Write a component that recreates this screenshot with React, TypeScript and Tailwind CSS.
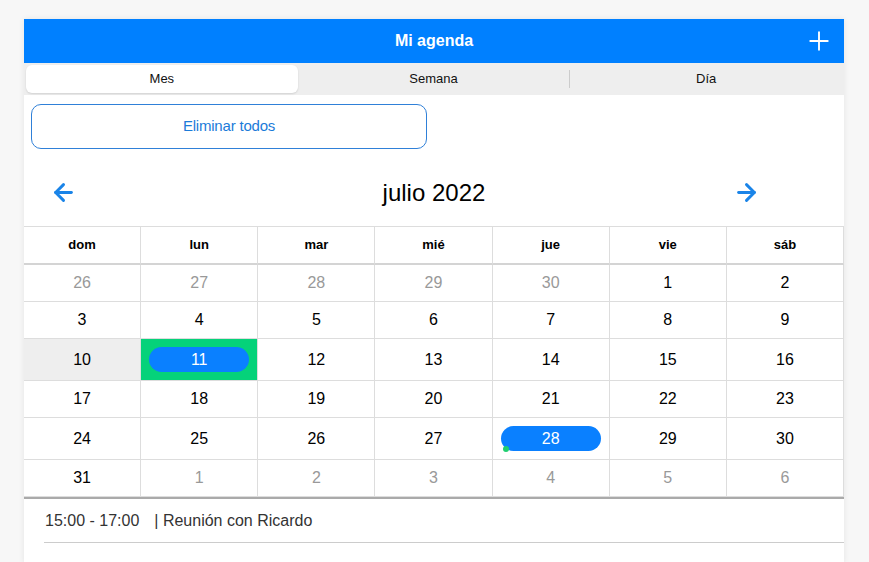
import React from 'react';
import { ArrowLeft, ArrowRight, Plus } from 'lucide-react';

type Day = { n: number; muted?: boolean; today?: boolean; selected?: boolean; event?: boolean };

const weekDays = ['dom', 'lun', 'mar', 'mié', 'jue', 'vie', 'sáb'];

const weeks: { tall?: boolean; days: Day[] }[] = [
  { days: [{ n: 26, muted: true }, { n: 27, muted: true }, { n: 28, muted: true }, { n: 29, muted: true }, { n: 30, muted: true }, { n: 1 }, { n: 2 }] },
  { days: [{ n: 3 }, { n: 4 }, { n: 5 }, { n: 6 }, { n: 7 }, { n: 8 }, { n: 9 }] },
  { tall: true, days: [{ n: 10, today: true }, { n: 11, selected: true }, { n: 12 }, { n: 13 }, { n: 14 }, { n: 15 }, { n: 16 }] },
  { days: [{ n: 17 }, { n: 18 }, { n: 19 }, { n: 20 }, { n: 21 }, { n: 22 }, { n: 23 }] },
  { tall: true, days: [{ n: 24 }, { n: 25 }, { n: 26 }, { n: 27 }, { n: 28, event: true }, { n: 29 }, { n: 30 }] },
  { days: [{ n: 31 }, { n: 1, muted: true }, { n: 2, muted: true }, { n: 3, muted: true }, { n: 4, muted: true }, { n: 5, muted: true }, { n: 6, muted: true }] },
];

const DayCell: React.FC<{ day: Day; tall?: boolean }> = ({ day, tall }) => {
  const base = `flex items-center justify-center border-r border-b border-[#dddddd] text-[16px] ${
    tall ? 'h-[42px]' : 'h-[37px]'
  }`;

  if (day.selected) {
    return (
      <div className={`${base} bg-[#05d27a] px-[8px]`}>
        <div className="w-full h-[25px] rounded-full bg-[#0a80ff] text-white flex items-center justify-center">
          {day.n}
        </div>
      </div>
    );
  }

  if (day.event) {
    return (
      <div className={`${base} px-[8px]`}>
        <div className="relative w-full h-[25px] rounded-full bg-[#0a80ff] text-white flex items-center justify-center">
          {day.n}
          <span className="absolute left-[2px] bottom-[-1px] w-[6px] h-[6px] rounded-full bg-[#1fcf6f]" />
        </div>
      </div>
    );
  }

  return (
    <div className={`${base} ${day.today ? 'bg-[#eeeeee]' : ''} ${day.muted ? 'text-[#999999]' : 'text-black'}`}>
      {day.n}
    </div>
  );
};

export default function App() {
  return (
    <div
      className="min-h-screen bg-[#f7f7f7] pt-[19px] pl-[24px]"
      style={{ fontFamily: '"Liberation Sans", Arial, sans-serif' }}
    >
      <div className="w-[820px] bg-white shadow-[0_0_6px_rgba(0,0,0,0.08)]">
        {/* Header */}
        <header className="h-[44px] bg-[#0080ff] grid grid-cols-[1fr_auto_1fr] items-center">
          <div />
          <h1 className="text-white text-[16px] font-bold">Mi agenda</h1>
          <div className="flex justify-end pr-[10px]">
            <Plus size={30} strokeWidth={1.5} className="text-white" />
          </div>
        </header>

        {/* Tabs */}
        <div className="h-[32px] bg-[#eeeeee] p-[2px] flex text-[13px] text-[#111]">
          <div className="flex-1 bg-white rounded-[6px] shadow-[0_1px_2px_rgba(0,0,0,0.12)] flex items-center justify-center">
            Mes
          </div>
          <div className="flex-1 flex items-center justify-center">Semana</div>
          <div className="w-px h-[18px] self-center bg-[#cccccc]" />
          <div className="flex-1 flex items-center justify-center">Día</div>
        </div>

        {/* Actions */}
        <div className="pt-[9px] px-[7px]">
          <button className="w-[396px] h-[45px] rounded-[10px] border border-[#2f80d8] text-[#1b7bd9] text-[15px] tracking-[-0.2px]">
            Eliminar todos
          </button>
        </div>

        {/* Month navigation */}
        <div className="h-[77px] pt-[10px] grid grid-cols-3 items-center">
          <div className="pl-[26px] flex">
            <ArrowLeft size={27} strokeWidth={2.6} className="text-[#1a84e8]" />
          </div>
          <div className="text-center text-[24px] text-black">julio 2022</div>
          <div className="pr-[84px] flex justify-end">
            <ArrowRight size={27} strokeWidth={2.6} className="text-[#1a84e8]" />
          </div>
        </div>

        {/* Calendar */}
        <div className="grid grid-cols-7 border-t border-b-2 border-t-[#dddddd] border-b-[#aaaaaa]">
          {weekDays.map((d) => (
            <div
              key={d}
              className="h-[38px] flex items-center justify-center border-r border-b-2 border-r-[#dddddd] border-b-[#d4d4d4] text-[13px] font-bold text-black"
            >
              {d}
            </div>
          ))}
          {weeks.map((w, wi) =>
            w.days.map((day, di) => <DayCell key={`${wi}-${di}`} day={day} tall={w.tall} />)
          )}
        </div>

        {/* Events */}
        <div className="pl-[20px]">
          <div className="h-[44px] flex items-center border-b border-[#cccccc] text-[16px] text-[#333333] pl-[1px]">
            <span>15:00 - 17:00</span>
            <span className="ml-[15px]">| Reunión con Ricardo</span>
          </div>
          <div className="h-[20px]" />
        </div>
      </div>
    </div>
  );
}
